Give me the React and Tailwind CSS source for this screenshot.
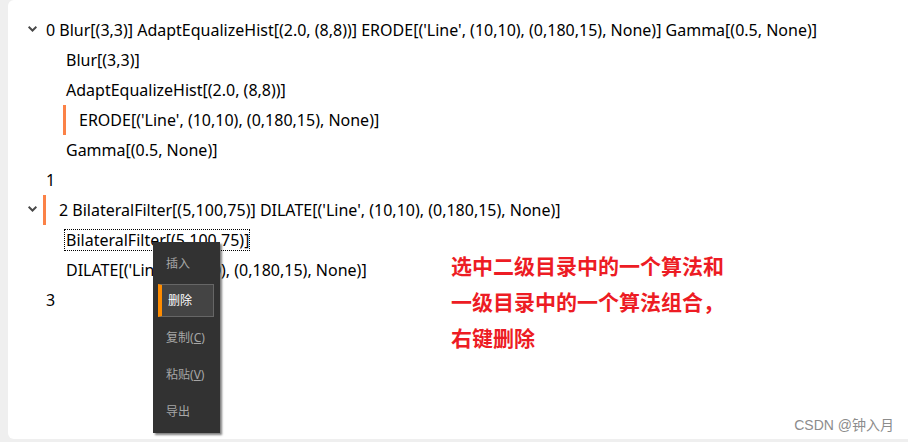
import React from "react";

const tree = [
  {
    label: "0 Blur[(3,3)] AdaptEqualizeHist[(2.0, (8,8))] ERODE[('Line', (10,10), (0,180,15), None)] Gamma[(0.5, None)]",
    children: [
      { label: "Blur[(3,3)]" },
      { label: "AdaptEqualizeHist[(2.0, (8,8))]" },
      { label: "ERODE[('Line', (10,10), (0,180,15), None)]", selected: true },
      { label: "Gamma[(0.5, None)]" },
    ],
  },
  { label: "1" },
  {
    label: "2 BilateralFilter[(5,100,75)] DILATE[('Line', (10,10), (0,180,15), None)]",
    selected: true,
    children: [
      { label: "BilateralFilter[(5,100,75)]", focused: true, menu: true },
      { label: "DILATE[('Line', (10,10), (0,180,15), None)]" },
    ],
  },
  { label: "3" },
];

const menuItems = [
  { label: "插入" },
  { label: "删除", active: true },
  { label: "复制", accel: "C" },
  { label: "粘贴", accel: "V" },
  { label: "导出" },
];

function Label({ node }) {
  if (node.selected) {
    return (
      <span className="flex h-full items-center border-l-3 border-[#fb8247] pl-[13px]">
        {node.label}
      </span>
    );
  }
  if (node.focused) {
    return (
      <span className="ml-px border border-dotted border-black pl-px leading-5">{node.label}</span>
    );
  }
  return <span className="pl-[3px]">{node.label}</span>;
}

function ContextMenu() {
  return (
    <div
      role="menu"
      className="absolute left-[145px] top-[17px] z-10 flex w-[67px] flex-col gap-1 bg-[#323232] p-[5px] text-xs shadow-[2px_2px_2px_rgba(0,0,0,0.5)]"
    >
      {menuItems.map((item) => (
        <button
          key={item.label}
          type="button"
          role="menuitem"
          className={
            item.active
              ? "flex h-[33px] w-14 items-center border border-l-4 border-[#666666] border-l-[#ff8c00] bg-[#444444] pl-1.5 text-white"
              : "flex h-[33px] w-14 items-center whitespace-nowrap pl-2 text-[#a6a6a6]"
          }
        >
          {item.label}
          {item.accel && (
            <span>
              (<u>{item.accel}</u>)
            </span>
          )}
        </button>
      ))}
    </div>
  );
}

function Chevron() {
  return (
    <button type="button" aria-label="Toggle" className="flex w-[35px] justify-end pr-1.5 pb-0.5">
      <svg width="9" height="6" viewBox="0 0 9 6" fill="none" stroke="#484848" strokeWidth="2">
        <path d="M0.6 0.8 L4.5 4.5 L8.4 0.8" />
      </svg>
    </button>
  );
}

export default function App() {
  return (
    <div className="flex h-screen flex-col bg-[#efefef] pb-[3px] pl-2 font-['Noto_Sans','Noto_Sans_CJK_SC',sans-serif]">
      <main className="relative flex-1 rounded-l-md bg-white pt-[15px]">
        <ul role="tree" className="text-base text-black">
          {tree.map((node) => (
            <li key={node.label} role="treeitem" aria-selected={!!node.selected}>
              <div className="flex h-[30px] items-center whitespace-nowrap">
                {node.children ? <Chevron /> : <span className="w-[35px]" />}
                <Label node={node} />
              </div>
              {node.children && (
                <ul role="group">
                  {node.children.map((child) => (
                    <li
                      key={child.label}
                      role="treeitem"
                      aria-selected={!!child.selected}
                      className="relative flex h-[30px] items-center whitespace-nowrap pl-[55px]"
                    >
                      <Label node={child} />
                      {child.menu && <ContextMenu />}
                    </li>
                  ))}
                </ul>
              )}
            </li>
          ))}
        </ul>
        <p className="absolute left-[443px] top-[248px] text-[21px] leading-9 font-bold text-[#ed1c24]">
          选中二级目录中的一个算法和
          <br />
          一级目录中的一个算法组合，
          <br />
          右键删除
        </p>
        <span className="absolute right-3.5 bottom-1 font-['Liberation_Sans','Noto_Sans_CJK_SC',sans-serif] text-sm leading-5 text-[#8c8c8c]">
          CSDN @钟入月
        </span>
      </main>
    </div>
  );
}
